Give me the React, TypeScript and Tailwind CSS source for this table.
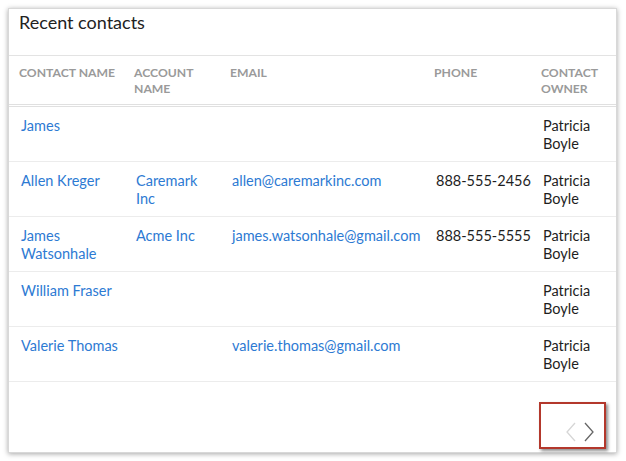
import React from "react";

type Row = { name: string; account: string; email: string; phone: string; owner: string };

const rows: Row[] = [
  { name: "James", account: "", email: "", phone: "", owner: "Patricia Boyle" },
  { name: "Allen Kreger", account: "Caremark Inc", email: "allen@caremarkinc.com", phone: "888-555-2456", owner: "Patricia Boyle" },
  { name: "James Watsonhale", account: "Acme Inc", email: "james.watsonhale@gmail.com", phone: "888-555-5555", owner: "Patricia Boyle" },
  { name: "William Fraser", account: "", email: "", phone: "", owner: "Patricia Boyle" },
  { name: "Valerie Thomas", account: "", email: "valerie.thomas@gmail.com", phone: "", owner: "Patricia Boyle" },
];

const cols = "grid grid-cols-[115px_96px_204px_107px_85px]";

export default function App() {
  return (
    <div className="w-[626px] h-[461px] bg-white p-[8px] pr-[9px] pb-[8px]" style={{ fontFamily: "Lato, 'Liberation Sans', sans-serif" }}>
      <div className="h-[445px] bg-white border border-[#d8d8d8] shadow-[0_1px_5px_rgba(0,0,0,0.35)] flex flex-col">
        <div className="h-[47px] border-b border-[#e3e3e3] px-[10px] pt-[1px]">
          <h1 className="text-[18px] leading-[24px] text-[#222] font-normal">Recent contacts</h1>
        </div>
        <div className={`${cols} h-[51px] border-b-[3px] border-double border-[#e0e0e0] pt-[9px] text-[12.2px] leading-[16px] font-bold text-[#9a9a9a] uppercase`}>
          <div className="px-[10px] whitespace-nowrap">Contact Name</div>
          <div className="px-[10px]">Account<br />Name</div>
          <div className="px-[10px]">Email</div>
          <div className="px-[10px]">Phone</div>
          <div className="px-[10px]">Contact<br />Owner</div>
        </div>
        {rows.map((r, i) => (
          <div key={i} className={`${cols} h-[55px] border-b border-[#ececec] pt-[10px] text-[14.5px] leading-[18px]`}>
            <div className="pl-[12px] pr-0 text-[#2d7ad3]">{r.name}</div>
            <div className="pl-[12px] pr-[6px] text-[#2d7ad3]">{r.account}</div>
            <div className="pl-[12px] pr-0 text-[#2d7ad3] whitespace-nowrap">{r.email}</div>
            <div className="pl-[12px] pr-0 text-[#1e1e1e] whitespace-nowrap">{r.phone}</div>
            <div className="pl-[12px] pr-[4px] text-[#1e1e1e]">{r.owner}</div>
          </div>
        ))}
        <div className="flex-1 flex justify-end items-start pt-[20px] pr-[10px]">
          <div className="w-[67px] h-[47px] border-2 border-[#b3382c] shadow-[2px_2px_3px_rgba(0,0,0,0.45)] flex items-center justify-end gap-[6px] pr-[9px] pt-[12px]">
            <svg width="12" height="20" viewBox="0 0 12 20" fill="none">
              <path d="M10 1 L2 10 L10 19" stroke="#d6d6d6" strokeWidth="1.3" />
            </svg>
            <svg width="12" height="20" viewBox="0 0 12 20" fill="none">
              <path d="M2 1 L10 10 L2 19" stroke="#666" strokeWidth="1.3" />
            </svg>
          </div>
        </div>
      </div>
    </div>
  );
}
